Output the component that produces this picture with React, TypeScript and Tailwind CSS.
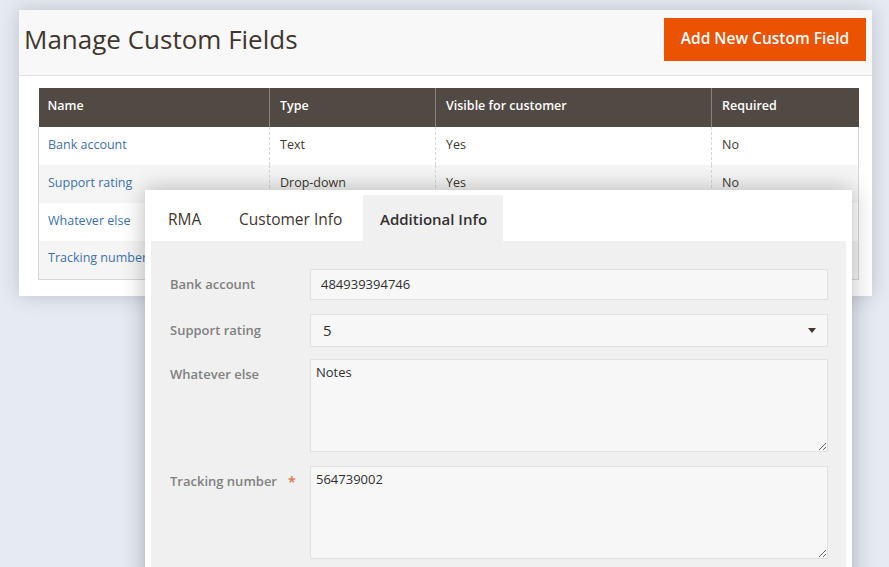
const columns = [
  { label: "Name", width: "w-[231px]" },
  { label: "Type", width: "w-[166px]" },
  { label: "Visible for customer", width: "w-[276px]" },
  { label: "Required", width: "w-[147px]" },
]

// rows 3 and 4 sit under the overlay panel, only their names peek out
const rows = [
  { name: "Bank account", type: "Text", visible: "Yes", required: "No" },
  { name: "Support rating", type: "Drop-down", visible: "Yes", required: "No" },
  { name: "Whatever else", type: "", visible: "", required: "" },
  { name: "Tracking number", type: "", visible: "", required: "" },
]

function FieldsTable() {
  return (
    <table className="w-[820px] table-fixed border-collapse text-[12.5px]">
      <thead>
        <tr className="h-[39px] bg-[#514943] text-white">
          {columns.map((c, i) => (
            <th
              key={c.label}
              className={`${c.width} px-[10px] pb-[2px] text-left font-semibold ${i > 0 ? "border-l border-[#8a817b]" : "pl-[9px]"}`}
            >
              {c.label}
            </th>
          ))}
        </tr>
      </thead>
      <tbody>
        {rows.map((r, i) => (
          <tr
            key={r.name}
            className={`h-[38px] ${i % 2 === 1 ? "bg-[#f5f5f5]" : "bg-white"} border-x border-[#d6d6d6] ${i === rows.length - 1 ? "border-b" : ""}`}
          >
            <td className="pl-[9px] pr-[10px] pb-[2px] text-[#3d72ad] whitespace-nowrap">{r.name}</td>
            <td className="px-[10px] pb-[2px] text-[#41362f] border-l border-dashed border-[#d6d6d6]">{r.type}</td>
            <td className="px-[10px] pb-[2px] text-[#41362f] border-l border-dashed border-[#d6d6d6]">{r.visible}</td>
            <td className="px-[10px] pb-[2px] text-[#41362f] border-l border-dashed border-[#d6d6d6]">{r.required}</td>
          </tr>
        ))}
      </tbody>
    </table>
  )
}

function ManagePanel() {
  return (
    <div className="w-[853px] h-[286px] bg-white shadow-[0_0_18px_rgba(40,50,70,0.22)]">
      <div className="h-[66px] bg-[#f8f8f8] border-b border-[#e3e3e3] flex items-start justify-between pl-[5px] pr-[6px]">
        <h1 className="text-[26px] text-[#41362f] leading-none mt-[16px]">Manage Custom Fields</h1>
        <button className="mt-[8px] w-[202px] h-[43px] pb-[2px] bg-[#eb5202] text-white text-[15.5px] font-semibold">
          Add New Custom Field
        </button>
      </div>
      <div className="pl-[19px] pt-[12px]">
        <FieldsTable />
      </div>
    </div>
  )
}

function Label({ text, required }: { text: string; required?: boolean }) {
  return (
    <div className="w-[140px] h-[31px] flex items-center text-[13px] font-semibold text-[#808080] shrink-0">
      {text}
      {required && <span className="ml-[11px] text-[#e2703f] text-[14px]">*</span>}
    </div>
  )
}

const inputBox = "w-[518px] bg-[#f7f7f7] border border-[#e1e1e1] text-[13px] text-[#303030]"

function AdditionalInfoPanel() {
  return (
    <div className="absolute left-[145px] top-[190px] w-[707px] h-[400px] bg-white px-[6px] pt-[5px] shadow-[0_0_22px_rgba(0,0,0,0.28)]">
      <div className="flex h-[46px] text-[15.5px]">
        <div className="w-[70px] pl-[17px] pt-[3px] flex items-center text-[#41362f]">RMA</div>
        <div className="w-[142px] pl-[18px] pt-[3px] flex items-center text-[#41362f]">Customer Info</div>
        <div className="w-[140px] pl-[17px] pt-[3px] flex items-center bg-[#f0f0f0] text-[15px] font-semibold text-[#303030]">
          Additional Info
        </div>
      </div>
      <div className="bg-[#f0f0f0] h-[360px] pl-[19px] pt-[28px]">
        <div className="flex">
          <Label text="Bank account" />
          <div className={`${inputBox} h-[31px] flex items-center px-[10px]`}>484939394746</div>
        </div>
        <div className="flex mt-[14px]">
          <div className="pt-[1px]">
            <Label text="Support rating" />
          </div>
          <div className={`${inputBox} h-[33px] flex items-center justify-between pl-[12px] pr-[11px] text-[15px]`}>
            5
            <svg width="8" height="5" viewBox="0 0 8 5">
              <path d="M0 0h8L4 5z" fill="#41362f" />
            </svg>
          </div>
        </div>
        <div className="flex mt-[12px]">
          <Label text="Whatever else" />
          <textarea
            readOnly
            defaultValue="Notes"
            className={`${inputBox} h-[93px] px-[5px] pt-[3px] leading-[18px] outline-none`}
          />
        </div>
        <div className="flex mt-[14px]">
          <Label text="Tracking number" required />
          <textarea
            readOnly
            defaultValue="564739002"
            className={`${inputBox} h-[93px] px-[5px] pt-[3px] leading-[18px] outline-none`}
          />
        </div>
      </div>
    </div>
  )
}

export default function App() {
  return (
    <div
      className="relative w-[889px] h-[567px] overflow-hidden bg-[#e6eaf2] pl-[19px] pt-[10px]"
      style={{ fontFamily: '"Open Sans", "Liberation Sans", sans-serif' }}
    >
      <ManagePanel />
      <AdditionalInfoPanel />
    </div>
  )
}
